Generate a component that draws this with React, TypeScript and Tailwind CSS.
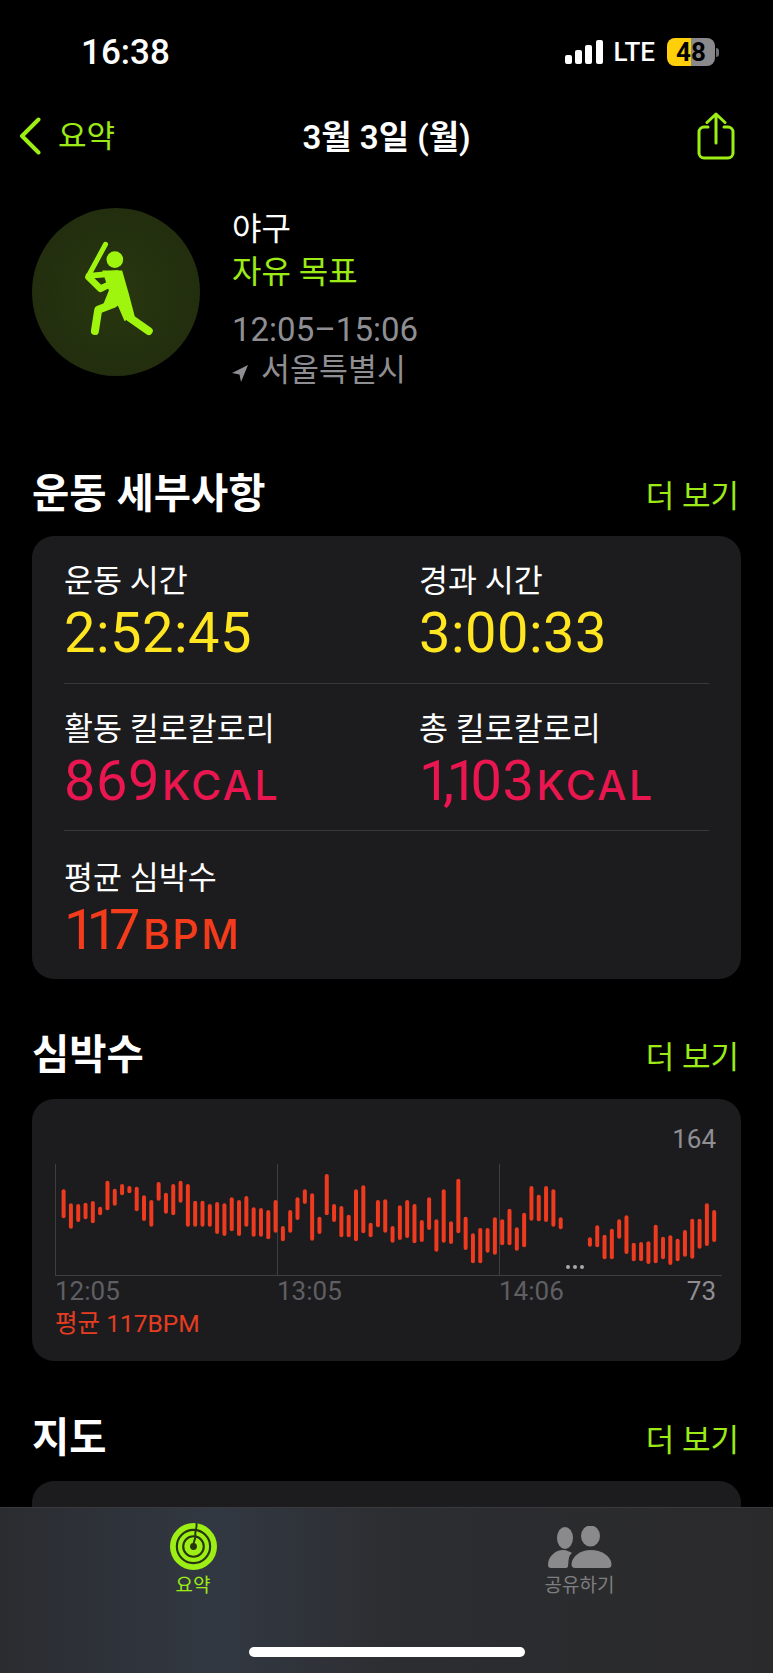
import type { ReactNode } from "react";

const LIME = "text-[#9cea16]";

// bar tops and bottoms, read off 3x crops of the chart
const bars: ([number, number] | null)[] = [
	[298, 385], [340, 416], [342, 396], [338, 388], [333, 400], [350, 376], [272, 361], [296, 347],
	[282, 316], [288, 310], [290, 364], [316, 393], [330, 410], [276, 332], [308, 371], [282, 376],
	[272, 338], [282, 410], [332, 410], [332, 410], [342, 410], [336, 432], [340, 438], [322, 424],
	[330, 438], [318, 410], [352, 440], [354, 440], [360, 448], [330, 428], [408, 454], [360, 428],
	[322, 390], [298, 342], [310, 452], [380, 432], [252, 376], [342, 396], [348, 442], [374, 442],
	[298, 454], [286, 430], [398, 442], [330, 412], [328, 428], [408, 458], [346, 450],
	[330, 444], [342, 460], [390, 456], [322, 420], [388, 485], [298, 458], [394, 462], [266, 430],
	[380, 480], [430, 520], [414, 520], [414, 488], [382, 494], [388, 466], [356, 466], [412, 482],
	[368, 472], [288, 392], [314, 394], [288, 396], [298, 410], [382, 418],
	null, null, null,
	[442, 470], [406, 472], [434, 508], [416, 508], [388, 446], [376, 492], [458, 514], [456, 514],
	[454, 522], [404, 520], [440, 508], [436, 525], [446, 514], [420, 500], [386, 506], [386, 476],
	[340, 468], [360, 456],
];

function StatusBar() {
	return (
		<div className="h-[104px] flex items-center justify-between pl-[81px] pr-[54px] text-white">
			<span className="text-[35px] font-medium leading-none">16:38</span>
			<div className="flex items-center">
				<svg width="38" height="24" viewBox="0 0 38 24" fill="white">
					<rect x="0" y="15" width="7" height="9" rx="2" />
					<rect x="10" y="10" width="7" height="14" rx="2" />
					<rect x="20" y="5" width="7" height="19" rx="2" />
					<rect x="31" y="0" width="7" height="24" rx="2" />
				</svg>
				<span className="ml-[11px] text-[26px] font-medium leading-none">LTE</span>
				<div className="ml-[12px] w-[48px] h-[28px] rounded-[8px] bg-[linear-gradient(90deg,#ffd00a_50%,#8a8a8c_50%)] flex items-center justify-center text-black text-[26px] font-bold leading-none">
					48
				</div>
				<div className="ml-[1px] w-[3px] h-[9px] rounded-r-full bg-[#6e6e70]" />
			</div>
		</div>
	);
}

function NavBar() {
	return (
		<div className="h-[64px] grid grid-cols-[1fr_auto_1fr] items-center px-[38px]">
			<div className={`-ml-[19px] flex items-center ${LIME}`}>
				<svg width="22" height="38" viewBox="0 0 22 38" fill="none" stroke="#9cee14" strokeWidth="4" strokeLinecap="round" strokeLinejoin="round">
					<path d="M19.500 2.500L3 19L19.500 35.500" />
				</svg>
				<span className="ml-[17px] text-[31px] leading-none">요약</span>
			</div>
			<div className="text-white text-[33px] font-semibold leading-none pt-[3px]">3월 3일 (월)</div>
			<div className="flex justify-end">
				<svg width="38" height="48" viewBox="0 0 38 48" fill="none" stroke="#9cee14" strokeWidth="3" strokeLinecap="round" strokeLinejoin="round">
					<path d="M11 15H7a5 5 0 0 0-5 5v21a5 5 0 0 0 5 5h24a5 5 0 0 0 5-5V20a5 5 0 0 0-5-5h-4" />
					<path d="M19 31V2M10 10.500l9-8.500 9 8.500" />
				</svg>
			</div>
		</div>
	);
}

function BatterIcon() {
	return (
		<svg width="87" height="113" viewBox="218 136 260 340" fill="none" stroke="#a0f50f" strokeLinecap="round" strokeLinejoin="round">
			<circle cx="343" cy="207" r="25" fill="#a0f50f" stroke="none" />
			<path d="M315 161L264 255" strokeWidth="15" />
			<path d="M264 256L350 248" strokeWidth="18" />
			<path d="M264 260L300 295L330 280" strokeWidth="20" />
			<path d="M305 240L365 240L385 310L403 378L372 392L352 345L300 362L325 300Z" fill="#a0f50f" stroke="none" />
			<path d="M340 340L293 358L283 422" strokeWidth="24" />
			<path d="M388 382L445 422" strokeWidth="24" />
			<path d="M285 263L307 263L296 273Z" fill="#26340f" stroke="none" />
		</svg>
	);
}

function WorkoutHeader() {
	return (
		<div className="mt-[40px] flex pl-[32px]">
			<div className="w-[168px] h-[168px] rounded-full bg-[radial-gradient(circle,#293710_0%,#222e0e_70%,#19230c_100%)] flex items-center justify-center">
				<BatterIcon />
			</div>
			<div className="ml-[32px] flex flex-col leading-none">
				<span className="mt-[1px] text-white text-[32px] h-[40px] flex items-center">야구</span>
				<span className={`mt-[3px] text-[32px] h-[40px] flex items-center ${LIME}`}>자유 목표</span>
				<span className="mt-[17px] text-[#8e8e93] text-[33px] h-[40px] flex items-center">12:05–15:06</span>
				<div className="mt-[2px] text-[#8e8e93] text-[31.500px] h-[40px] flex items-center">
					<svg width="16" height="17" viewBox="0 0 16 17" fill="#8e8e93" className="mt-[4px]">
						<path d="M16 0L9 17L7.500 9.500L0 8Z" />
					</svg>
					<span className="ml-[13px]">서울특별시</span>
				</div>
			</div>
		</div>
	);
}

function SectionTitle({ title }: { title: string }) {
	return (
		<div className="h-[48px] flex items-center justify-between pl-[32px] pr-[34px]">
			<h2 className="text-white text-[40.500px] font-bold leading-none">{title}</h2>
			<span className={`text-[31px] leading-none pt-[4px] ${LIME}`}>더 보기</span>
		</div>
	);
}

function Metric({ label, value, unit, color }: { label: string; value: ReactNode; unit?: string; color: string }) {
	return (
		<div className="flex flex-col">
			<span className="pt-[3px] text-white text-[31.500px] leading-none h-[36px] flex items-center">{label}</span>
			<div className={`mt-[9px] h-[52px] flex items-baseline whitespace-nowrap ${color}`}>
				<span className="text-[56px] tracking-[0.500px] leading-[52px]">{value}</span>
				{unit && <span className="ml-[2px] font-['Inter'] text-[41px] font-medium tracking-[2.500px] leading-none">{unit}</span>}
			</div>
		</div>
	);
}

function WorkoutDetails() {
	return (
		<div className="mt-[18px] mx-[32px] h-[443px] rounded-[22px] bg-[#1c1c1e] pl-[32px] pr-[32px] pt-[26px]">
			<div className="grid grid-cols-[355px_1fr] h-[121px]">
				<Metric label="운동 시간" value="2:52:45" color="text-[#ffe620]" />
				<Metric label="경과 시간" value="3:00:33" color="text-[#ffe620]" />
			</div>
			<div className="h-px bg-[#38383a]" />
			<div className="grid grid-cols-[355px_1fr] h-[146px] pt-[26px]">
				<Metric label="활동 킬로칼로리" value="869" unit="KCAL" color="text-[#ea1650]" />
				<Metric
					label="총 킬로칼로리"
					value={
						<>
							{/* the ones sit narrow in the reference, roboto's are tabular */}
							<span className="tracking-[-7.500px]">1,1</span>03
						</>
					}
					unit="KCAL"
					color="text-[#ea1650]"
				/>
			</div>
			<div className="h-px bg-[#38383a]" />
			<div className="pt-[28px]">
				<Metric
					label="평균 심박수"
					value={
						<>
							<span className="tracking-[-9px]">11</span>7
						</>
					}
					unit="BPM"
					color="text-[#f43c1c]"
				/>
			</div>
		</div>
	);
}

function HeartChart() {
	return (
		<svg width="668" height="112" viewBox="0 0 668 112" className="block">
			<path d="M0.500 0V111M222.500 0V111M444.500 0V111M0 111.500H667" stroke="#3f3f42" strokeWidth="1" fill="none" />
			{bars.map((b, i) =>
				b ? (
					<rect
						key={i}
						x={8.6 + i * 7.31 - 2}
						y={b[0] / 3 - 74}
						width="4"
						height={(b[1] - b[0]) / 3}
						rx="2"
						fill="#ee3a1f"
					/>
				) : null,
			)}
			<circle cx="513" cy="103" r="2" fill="#a8a8aa" />
			<circle cx="520" cy="103" r="2" fill="#a8a8aa" />
			<circle cx="527" cy="103" r="2" fill="#a8a8aa" />
		</svg>
	);
}

function HeartRateCard() {
	return (
		<div className="mt-[20px] mx-[32px] h-[262px] rounded-[22px] bg-[#1c1c1e] pl-[23px] pr-[19px] pt-[26px]">
			<div className="h-[39px] flex justify-end pr-[6px] text-[#8e8e93] text-[26px] leading-[28px]">164</div>
			<HeartChart />
			<div className="mt-[1px] h-[28px] flex text-[#5f5f63] text-[26px] leading-[28px]">
				<span className="w-[222px]">12:05</span>
				<span className="w-[222px]">13:05</span>
				<span>14:06</span>
				<span className="ml-auto mr-[6px] text-[#8e8e93]">73</span>
			</div>
			<div className="mt-[5px] text-[#e63c22] text-[24.500px] leading-[28px]">평균 117BPM</div>
		</div>
	);
}

function TabBar() {
	return (
		<div className="absolute left-0 right-0 bottom-0 h-[166px] border-t border-[#3a3a3c] bg-[linear-gradient(90deg,#2a2c30_0%,#323842_28%,#2c2d30_52%,#2a2a2c_100%)]">
			<div className="grid grid-cols-[386px_1fr] h-[96px] pt-[15px]">
				<div className="flex flex-col items-center">
					<svg width="47" height="47" viewBox="0 0 48 48" fill="none">
						<circle cx="24" cy="24" r="24" fill="#9cee14" />
						<circle cx="24" cy="24" r="17" stroke="#26340f" strokeWidth="2.200" />
						<circle cx="24" cy="24" r="10.500" stroke="#26340f" strokeWidth="2.200" />
						<circle cx="24" cy="24" r="3.500" fill="#26340f" />
						<path d="M27 0C28 5 25 8 26 13C26.500 16 24 18 24 22" stroke="#26340f" strokeWidth="2" />
					</svg>
					<span className={`mt-[6px] text-[19px] leading-none ${LIME}`}>요약</span>
				</div>
				<div className="flex flex-col items-center">
					<svg width="64" height="42" viewBox="0 0 64 42" fill="#8a8a8c" className="mt-[3px]">
						<ellipse cx="17" cy="12" rx="8" ry="11" />
						<ellipse cx="42.500" cy="10" rx="9.500" ry="10.500" />
						<path d="M0 39C0 30 8 24 15 24C19 24 22 26 24 27C20 30 21 34 20 40C20 41 19 42 18 42H3C1 42 0 41 0 39Z" />
						<path d="M23.500 38C24 30 33 24 43 24C53 24 63 30 63.500 38C63.500 41 62 42 60 42H27C25 42 23.500 41 23.500 38Z" />
					</svg>
					<span className="mt-[8px] text-[#7e7e80] text-[19px] leading-none">공유하기</span>
				</div>
			</div>
			<div className="mt-[43px] mx-auto w-[276px] h-[10px] rounded-full bg-white" />
		</div>
	);
}

export default function App() {
	return (
		<div className="relative w-[773px] h-[1673px] overflow-hidden bg-black font-['Roboto','Noto_Sans_CJK_KR',sans-serif]">
			<StatusBar />
			<NavBar />
			<WorkoutHeader />
			<div className="mt-[79px]">
				<SectionTitle title="운동 세부사항" />
			</div>
			<WorkoutDetails />
			<div className="mt-[52px]">
				<SectionTitle title="심박수" />
			</div>
			<HeartRateCard />
			<div className="mt-[53px]">
				<SectionTitle title="지도" />
			</div>
			<div className="mt-[19px] mx-[32px] h-[200px] rounded-[22px] bg-[#1c1c1e]" />
			<TabBar />
		</div>
	);
}
